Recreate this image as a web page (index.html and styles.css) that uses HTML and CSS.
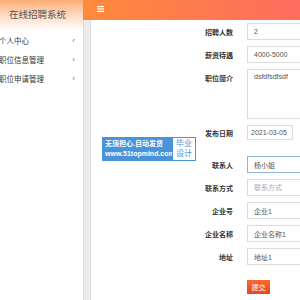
FILE: index.html
```html
<!DOCTYPE html>
<html lang="zh">
  <head>
    <meta charset="UTF-8" />
    <title>在线招聘系统</title>
    <link rel="stylesheet" href="styles.css">
  </head>
  <body>
    <div class="app">
      <aside class="side">
        <div class="brand">在线招聘系统</div>
        <ul class="menu">
          <li><span>个人中心</span><i>‹</i></li>
          <li><span>职位信息管理</span><i>‹</i></li>
          <li><span>职位申请管理</span><i>‹</i></li>
        </ul>
      </aside>
      <div class="main">
        <header class="topbar">
          <svg class="burger" width="7" height="6" viewBox="0 0 7 6">
            <rect x="0" y="0" width="7" height="1.2" fill="#fff" />
            <rect x="0" y="2.4" width="7" height="1.2" fill="#fff" />
            <rect x="0" y="4.8" width="7" height="1.2" fill="#fff" />
          </svg>
        </header>
        <div class="content">
          <div class="strip"></div>
          <form class="job-form">
            <div class="row"><label>招聘人数</label><input type="text" value="2" /></div>
            <div class="row"><label>薪资待遇</label><input type="text" value="4000-5000" /></div>
            <div class="row row-top"><label>职位简介</label><textarea>dsfdfsdfsdf</textarea></div>
            <div class="row row-date"><label>发布日期</label><input class="date" type="text" value="2021-03-05" /></div>
            <div class="row"><label>联系人</label><input class="focus" type="text" value="杨小姐" /></div>
            <div class="row"><label>联系方式</label><input type="text" placeholder="联系方式" /></div>
            <div class="row"><label>企业号</label><input type="text" value="企业1" /></div>
            <div class="row"><label>企业名称</label><input type="text" value="企业名称1" /></div>
            <div class="row row-last"><label>地址</label><input type="text" value="地址1" /></div>
            <div class="row"><label></label><button type="button" class="submit">提交</button></div>
          </form>
        </div>
      </div>
      <div class="ad">
        <div class="ad-blue">
          <span>无须担心.自动发货</span>
          <span>www.51topmind.com</span>
        </div>
        <div class="ad-white">
          <span>毕业</span>
          <span>设计</span>
        </div>
      </div>
    </div>
  </body>
</html>
```
FILE: styles.css
```css
:root {
  --main-font: "Liberation Sans", "Noto Sans CJK SC", sans-serif;
  --orange: #fe8a3b;
  --coral: #fd6d5f;
  --text-color: #333;
  --border-color: #dcdcdc;
}

html {
  box-sizing: border-box;
  font-family: var(--main-font);
}

*,
*:before,
*:after {
  box-sizing: inherit;
}

body {
  margin: 0;
  overflow: hidden;
  background: #fff;
}

.app {
  display: flex;
  position: relative;
  width: 300px;
  height: 300px;
  overflow: hidden;
}

.side {
  width: 83px;
  flex-shrink: 0;
  background: #fff;
}

.brand {
  height: 31px;
  padding: 7px 8px 0 0;
  text-align: center;
  font-size: 9.5px;
  color: #555;
  background: linear-gradient(to bottom, #fbab75 0%, #fdd7bd 45%, #fff 100%);
}

.menu {
  list-style: none;
  margin: 0;
  padding: 0;
}

.menu li {
  display: flex;
  justify-content: space-between;
  align-items: center;
  height: 19px;
  padding: 0 8px 0 0;
  margin-left: -1px;
  font-size: 7.5px;
  color: var(--text-color);
}

.menu i {
  font-style: normal;
  color: #777;
  font-size: 8px;
}

.main {
  flex: 1;
  display: flex;
  flex-direction: column;
  min-width: 0;
}

.topbar {
  height: 22px;
  display: flex;
  align-items: center;
  padding-left: 14px;
  background: linear-gradient(to right, var(--orange), var(--coral));
}

.burger {
  display: block;
  margin-top: -2px;
}

.content {
  flex: 1;
  display: flex;
}

.strip {
  width: 8px;
  flex-shrink: 0;
  background: #ebebeb;
  border-left: 1px solid #dadada;
  border-right: 1px solid #e0e0e0;
}

.job-form {
  flex: 1;
  padding-top: 3px;
}

.row {
  display: flex;
  align-items: center;
  margin-bottom: 6px;
}

.row label {
  width: 142px;
  flex-shrink: 0;
  margin-right: 14px;
  text-align: right;
  font-size: 7px;
  font-weight: bold;
  color: var(--text-color);
}

.row input,
.row textarea {
  width: 60px;
  height: 17px;
  padding: 0 6px;
  border: 1px solid var(--border-color);
  border-right: none;
  font-family: var(--main-font);
  font-size: 7px;
  color: #555;
  outline: none;
}

.row input::placeholder {
  color: #aaa;
}

.row-top {
  align-items: flex-start;
}

.row-top label {
  padding-top: 4px;
}

.row-top textarea {
  height: 50px;
  padding-top: 3px;
  resize: none;
}

.row-date {
  margin-bottom: 16px;
}

.row input.date {
  width: 46px;
  height: 15px;
  padding: 0 3px;
  border-right: 1px solid var(--border-color);
}

.row input.focus {
  border-color: #8fb6dc;
}

.row-last {
  margin-bottom: 15px;
}

.submit {
  width: 23px;
  height: 14px;
  padding: 0;
  border: none;
  font-family: var(--main-font);
  font-size: 7px;
  color: #fff;
  background: linear-gradient(to bottom, #f76a33, #e14a1f);
}

.ad {
  position: absolute;
  left: 102px;
  top: 137px;
  display: flex;
  height: 24px;
}

.ad-blue {
  display: flex;
  flex-direction: column;
  justify-content: center;
  width: 70px;
  padding-left: 3px;
  background: #4b93d8;
  color: #fff;
  font-size: 7px;
  font-weight: bold;
  line-height: 10px;
}

.ad-white {
  display: flex;
  flex-direction: column;
  align-items: center;
  justify-content: center;
  width: 24px;
  border: 1px solid #4b93d8;
  background: #fff;
  color: #4b93d8;
  font-size: 8px;
  line-height: 10px;
}
```
